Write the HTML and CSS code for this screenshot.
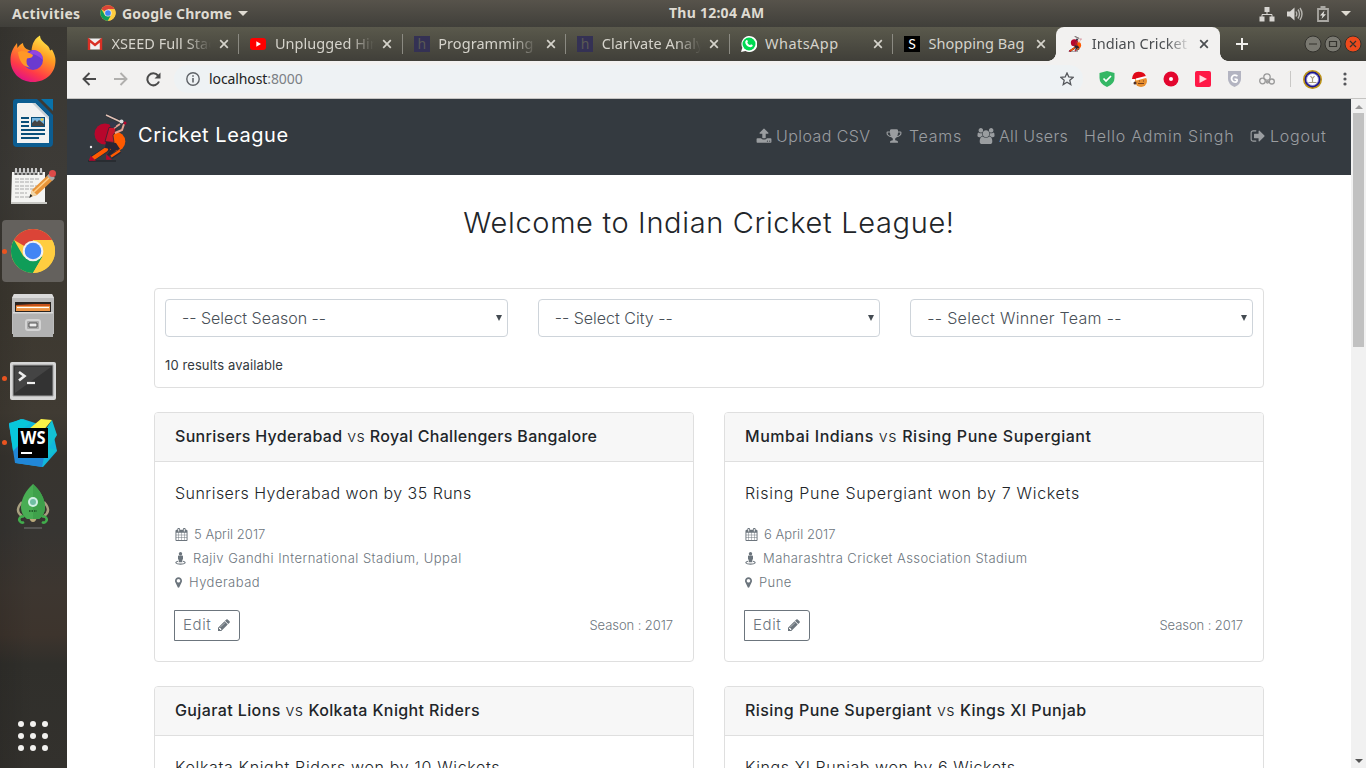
FILE: index.html
```html
<!DOCTYPE html>
<html lang="en">
<head>
<meta charset="utf-8">
<title>Indian Cricket League</title>
<link rel="stylesheet" href="styles.css">
</head>
<body>
<svg class="defs" width="0" height="0">
  <symbol id="chrome" viewBox="0 0 48 48">
    <circle cx="24" cy="24" r="23" fill="#ffcd40"/>
    <path d="M24 24 4.1 12.5A23 23 0 0 1 43.9 12.5H24z" fill="#db4437"/>
    <path d="M4.100 12.500A23 23 0 0 0 24 47L34 29.500 24 34 14 29.500z" fill="#0f9d58"/>
    <path d="M24 12.500h19.900A23 23 0 0 1 24 47l10-17z" fill="#ffcd40"/>
    <circle cx="24" cy="24" r="10.800" fill="#f1f1f1"/><circle cx="24" cy="24" r="8.600" fill="#4285f4"/>
  </symbol>
  <symbol id="player" viewBox="0 0 40 48">
    <circle cx="18" cy="20" r="10.500" fill="#b8062c"/><circle cx="28.500" cy="27.500" r="9.800" fill="#ff5a00"/>
    <path d="M1 47h28" stroke="#22262b" stroke-width="1.300"/>
    <path d="M20 35 6 44" stroke="#282635" stroke-width="5.500" stroke-linecap="round"/>
    <path d="M19 35.500 6.500 44" stroke="#ff5a00" stroke-width="4.200" stroke-linecap="round"/>
    <path d="M19 27l10 2 4 6-5 2-6 5-2-1 4-6-6-1z" fill="#292534"/>
    <path d="M33 37l-9 6" stroke="#282635" stroke-width="4"/><path d="M33 36.500l-9 6" stroke="#ff5a00" stroke-width="2.500"/>
    <path d="M22 13.500l7 0-1 5-2 3 1 7-9-1z" fill="#c8162d" stroke="#302434" stroke-width=".8"/>
    <path d="M28 19l7-3 2-6M27 14l6-4" stroke="#e4a394" stroke-width="2" fill="none"/>
    <circle cx="26" cy="10.500" r="3.200" fill="#33384b"/><path d="M19 1l15 7" stroke="#282c35" stroke-width="3"/><path d="M19 1l15 7" stroke="#e3c2b5" stroke-width="1.500"/>
    <circle cx="34.500" cy="7.500" r="2" fill="#ddd"/><circle cx="38" cy="9" r="1.500" fill="#b8062c"/><circle cx="4" cy="33" r="1.200" fill="#eee"/>
    <path d="M4 43l3 3H3zM20 42l3 3h-3z" fill="#b8062c" stroke="#b8062c" stroke-width="1.600"/>
  </symbol>
  <symbol id="upload" viewBox="0 0 1792 1792"><path d="M1344 1472q0-26-19-45t-45-19-45 19-19 45 19 45 45 19 45-19 19-45zm256 0q0-26-19-45t-45-19-45 19-19 45 19 45 45 19 45-19 19-45zm128-224v320q0 40-28 68t-68 28h-1472q-40 0-68-28t-28-68v-320q0-40 28-68t68-28h427q21 56 70.500 92t110.500 36h256q61 0 110.500-36t70.500-92h427q40 0 68 28t28 68zm-325-648q-17 40-59 40h-256v448q0 26-19 45t-45 19h-256q-26 0-45-19t-19-45v-448h-256q-42 0-59-40-17-39 14-69l448-448q18-19 45-19t45 19l448 448q31 30 14 69z"/></symbol>
  <symbol id="trophy" viewBox="0 0 1792 1792"><path d="M522 883q-74-162-74-371h-256v96q0 78 94.500 162t235.500 113zm1078-275v-96h-256q0 209-74 371 141-29 235.500-113t94.500-162zm128-128v128q0 71-41.500 143t-112 130-173 97.500-215.500 44.500q-42 54-95 95-38 34-52.500 72.500t-14.500 89.500q0 54 30.500 91t97.500 37q75 0 133.500 45.500t58.500 114.500v64q0 14-9 23t-23 9h-832q-14 0-23-9t-9-23v-64q0-69 58.500-114.500t133.500-45.500q67 0 97.500-37t30.500-91q0-51-14.500-89.500t-52.500-72.500q-53-41-95-95-113-5-215.500-44.500t-173-97.500-112-130-41.500-143v-128q0-40 28-68t68-28h288v-96q0-66 47-113t113-47h576q66 0 113 47t47 113v96h288q40 0 68 28t28 68z"/></symbol>
  <symbol id="users" viewBox="0 0 1920 1792"><path d="M593 896q-162 5-265 128h-134q-82 0-138-40.500t-56-118.500q0-353 124-353 6 0 43.500 21t97.500 42.500 119 21.500q67 0 133-23-5 37-5 66 0 139 81 256zm1071 637q0 120-73 189.500t-194 69.500h-874q-121 0-194-69.500t-73-189.500q0-53 3.500-103.500t14-109 26.500-108.500 43-97.500 62-81 85.500-53.500 111.500-20q10 0 43 21.500t73 48 107 48 135 21.500 135-21.500 107-48 73-48 43-21.500q61 0 111.500 20t85.500 53.500 62 81 43 97.500 26.500 108.500 14 109 3.500 103.500zm-1024-1277q0 106-75 181t-181 75-181-75-75-181 75-181 181-75 181 75 75 181zm704 384q0 159-112.500 271.500t-271.500 112.500-271.500-112.500-112.500-271.500 112.500-271.500 271.500-112.500 271.500 112.500 112.500 271.500zm576 225q0 78-56 118.500t-138 40.500h-134q-103-123-265-128 81-117 81-256 0-29-5-66 66 23 133 23 59 0 119-21.500t97.500-42.500 43.500-21q124 0 124 353zm-128-609q0 106-75 181t-181 75-181-75-75-181 75-181 181-75 181 75 75 181z"/></symbol>
  <symbol id="signout" viewBox="0 0 1792 1792"><path d="M704 1440q0 4 1 20t.5 26.500-3 23.500-10 19.500-20.500 6.500h-320q-119 0-203.500-84.500t-84.500-203.500v-704q0-119 84.500-203.500t203.500-84.500h320q13 0 22.500 9.500t9.500 22.500q0 4 1 20t.5 26.500-3 23.500-10 19.500-20.500 6.500h-320q-66 0-113 47t-47 113v704q0 66 47 113t113 47h312l11.500 1 11.500 3 8 5.500 7 9 2 13.500zm928-544q0 26-19 45l-544 544q-19 19-45 19t-45-19-19-45v-288h-448q-26 0-45-19t-19-45v-384q0-26 19-45t45-19h448v-288q0-26 19-45t45-19 45 19l544 544q19 19 19 45z"/></symbol>
  <symbol id="calendar" viewBox="0 0 1792 1792"><path d="M192 1664h288v-288h-288v288zm352 0h320v-288h-320v288zm-352-352h288v-320h-288v320zm352 0h320v-320h-320v320zm-352-384h288v-288h-288v288zm736 736h320v-288h-320v288zm-384-736h320v-288h-320v288zm768 736h288v-288h-288v288zm-384-352h320v-320h-320v320zm-352-864v-288q0-13-9.500-22.500t-22.500-9.500h-64q-13 0-22.500 9.500t-9.500 22.500v288q0 13 9.500 22.500t22.500 9.500h64q13 0 22.500-9.500t9.500-22.500zm736 864h288v-320h-288v320zm-384-384h320v-288h-320v288zm384 0h288v-288h-288v288zm32-480v-288q0-13-9.500-22.500t-22.500-9.500h-64q-13 0-22.500 9.500t-9.500 22.500v288q0 13 9.500 22.500t22.500 9.500h64q13 0 22.500-9.500t9.500-22.500zm384-64v1280q0 52-38 90t-90 38h-1408q-52 0-90-38t-38-90v-1280q0-52 38-90t90-38h128v-96q0-66 47-113t113-47h64q66 0 113 47t47 113v96h384v-96q0-66 47-113t113-47h64q66 0 113 47t47 113v96h128q52 0 90 38t38 90z"/></symbol>
  <symbol id="street" viewBox="0 0 11 13"><circle cx="5.500" cy="1.700" r="1.700"/><path d="M3.800 3.600h3.400q.8 0 .8.800V7.500H7.300V10.300H3.700V7.500H3V4.400q0-.8.800-.8z"/><path d="M3 9.300c-3.600.8-2.500 2.800 2.500 2.800S11.600 10.100 8 9.300" fill="none" stroke="currentColor" stroke-width="1.100"/></symbol>
  <symbol id="marker" viewBox="384 0 1024 1792"><path d="M1152 640q0-106-75-181t-181-75-181 75-75 181 75 181 181 75 181-75 75-181zm256 0q0 109-33 179l-364 774q-16 33-47.500 52t-67.500 19-67.500-19-46.500-52l-365-774q-33-70-33-179 0-212 150-362t362-150 362 150 150 362z"/></symbol>
  <symbol id="pencil" viewBox="128 128 1536 1536"><path d="M491 1536l91-91-235-235-91 91v107h128v128h107zm523-928q0-22-22-22-10 0-17 7l-542 542q-7 7-7 17 0 22 22 22 10 0 17-7l542-542q7-7 7-17zm-54-192l416 416-832 832h-416v-416zm683 96q0 53-37 90l-166 166-416-416 166-165q36-38 90-38 53 0 91 38l235 234q37 39 37 91z"/></symbol>
  <symbol id="close" viewBox="0 0 10 10"><path d="M1.200 1.200l7.600 7.600M8.800 1.200L1.200 8.800" stroke="currentColor" stroke-width="1.700"/></symbol>
</svg>

<header class="topbar">
  <span class="activities">Activities</span>
  <svg class="top-chrome" width="16" height="16"><use href="#chrome"/></svg>
  <span class="appname">Google Chrome</span>
  <i class="caret"></i>
  <span class="clock">Thu 12:04 AM</span>
  <div class="tray">
    <svg width="16" height="16" viewBox="0 0 16 16"><path d="M5.500 1h5v5h-5zM.5 10.500h5v5h-5zM10.500 10.500h5v5h-5z" fill="#d8d6d2"/><path d="M8 6v2.500M3 11V8.500h10V11" fill="none" stroke="#d8d6d2"/></svg>
    <svg width="16" height="16" viewBox="0 0 16 16"><path d="M0 5.500h3L7.500 1.500v13L3 10.500H0z" fill="#d8d6d2"/><path d="M9 5.500q1.500 2.500 0 5M11 3.500q3 4.500 0 9M13 2q4 6 0 12" fill="none" stroke="#b6b4af" stroke-width="1.400"/></svg>
    <svg width="12" height="16" viewBox="0 0 12 16"><path d="M1 3h10v12H1zM3.500 1h5" fill="none" stroke="#aaa8a3" stroke-width="1.800"/><path d="M7.500 4.500L3 9.500h2.500L4.500 13 9 8.300H6.500z" fill="#e0deda"/></svg>
    <i class="caret"></i>
  </div>
</header>

<div class="desktop">
  <nav class="dock">
    <div class="slot"><svg width="48" height="48" viewBox="0 0 48 48">
      <defs><linearGradient id="ff" x1=".8" y1="0" x2=".3" y2="1"><stop offset="0" stop-color="#fff44f"/><stop offset=".4" stop-color="#ff9a22"/><stop offset=".75" stop-color="#ff3b47"/><stop offset="1" stop-color="#e0108a"/></linearGradient></defs>
      <path d="M24 47C11 47 1.500 37.500 1.500 24.500 1.500 18 4 13 8 8l.5 5C10.500 10 12 9 14 8q0 3.500 3.500 6l5 2C23 8 26 3.500 31 .5c0 7 10 9 10 15l2-1q3.500 6 3.500 11C46.500 38 37 47 24 47z" fill="url(#ff)"/>
      <circle cx="24" cy="25" r="10" fill="#6a3ad0"/><path d="M24 15q10 1 10 10-8-8-16-5z" fill="#9346e0"/>
      <path d="M9 17q5-3 15 3 0 3-6 3.500-2 6 3 9-10-1-12-15z" fill="#ff9826"/></svg></div>
    <div class="slot"><svg width="40" height="48" viewBox="0 0 40 48"><path d="M3 0h21l16 16v28q0 4-4 4H4q-4 0-4-4V3q0-3 3-3z" fill="#0c5d91"/><path d="M28 0h12v12z" fill="#0872aa"/><path d="M5 4h17l14 14v26H4V5z" fill="#f2f2f2"/><path d="M22 4l14 14v3L19 4z" fill="#c9d1d5"/><path d="M8 19h8M8 23h8M8 27h8M8 31h24M8 35h24M8 39h18" stroke="#0a4f7a" stroke-width="2"/><path d="M18 18h14v10H18z" fill="#0a4f7a"/><path d="M19 19h12v8H19z" fill="#79b6df"/><path d="M19 27v-3l3-3 2 2 2-2 5 4v2z" fill="#444"/><circle cx="29" cy="20.500" r="1.300" fill="#f3d13c"/></svg></div>
    <div class="slot"><svg class="notes" width="46" height="40" viewBox="0 0 46 40"><path d="M2 5h33v32H1z" fill="#f4f4f2"/><path d="M1 37h36v-2H1z" fill="#c9c9c5"/><path d="M6 2v6M10 2v6M14 2v6M18 2v6M22 2v6M26 2v6M31 2v6" stroke="#555" stroke-width="3"/><path d="M6 1v5M10 1v5M14 1v5M18 1v5M22 1v5M26 1v5M31 1v5" stroke="#eee" stroke-width="1.500"/><path d="M5 12h24M5 15h18M5 19h26M5 22h20M5 26h12M5 30h16" stroke="#aaa" stroke-dasharray="4 1"/><path d="M20 30l2-7L39 7l5 5-17 16z" fill="#e8953a"/><path d="M24 25L41 9" stroke="#ffd08a" stroke-width="1.500"/><path d="M20 30l2-7 5 5z" fill="#f1d6a8"/><path d="M19 31l1.500-4 2 2z" fill="#222"/><path d="M37 9l3-3 5 5-3 3z" fill="#aaa"/><circle cx="42.500" cy="6.500" r="3.500" fill="#dd4a49"/></svg></div>
    <div class="slot running selected"><svg width="46" height="46"><use href="#chrome"/></svg></div>
    <div class="slot"><svg width="44" height="44" viewBox="0 0 44 44"><path d="M3 1h38l2 4v36H1V5z" fill="#bcbcbc"/><path d="M3 1h38l2 4H1z" fill="#dadada"/><path d="M4 9h36v10H4z" fill="#29231f"/><path d="M5 12l18-1 16 0v7H5z" fill="#c6521c"/><path d="M5 13h34v5H5z" fill="#ee9545"/><path d="M6 14.500h32" stroke="#fff" stroke-width="1.200"/><path d="M2 19h40v25H2z" fill="#b2b2b2"/><path d="M2 19h40v1.500H2z" fill="#d9d9d9"/><rect x="15" y="27" width="14" height="10" rx="2" fill="#aaa" stroke="#d4d4d4" stroke-width="2"/><path d="M18 30h8v4h-8z" fill="#eee" stroke="#555"/></svg></div>
    <div class="slot running"><svg class="terminal" width="46" height="38" viewBox="0 0 46 38"><rect width="46" height="38" rx="2" fill="#d6d6d6"/><path d="M3 3h40v31H3z" fill="#333" stroke="#a0a0a0"/><path d="M5 5h36L5 31z" fill="#444"/><path d="M9 10l5.500 4L9 18.500" stroke="#eee" stroke-width="2.600" fill="none"/><path d="M17 21h8" stroke="#eee" stroke-width="2.200"/></svg></div>
    <div class="slot running"><svg width="48" height="48" viewBox="0 0 48 48"><path d="M0 4L14 0l12 4 18 9 4 19-14 16-27-4z" fill="#11b7dd"/><path d="M0 5l6 39 27 4 2-10H12L8 4z" fill="#2187d8"/><path d="M0 5L12 0l10 4-12 8v14L4 32z" fill="#08c7db"/><path d="M20 10L32 0l11 1-9 11z" fill="#fcf348"/><path d="M37 10l6-9 5 15-8 13 8 2-10 8z" fill="#13c1d3"/><path d="M9 9h30v30H9z" fill="#000"/><text class="ws" x="24" y="25" text-anchor="middle" textLength="25" lengthAdjust="spacingAndGlyphs">WS</text><path d="M12 34h11" stroke="#fff" stroke-width="2"/></svg></div>
    <div class="slot"><svg class="rocket" width="34" height="48" viewBox="0 0 34 48"><path d="M6 20q-8 9 0 14M28 20q8 9 0 14" stroke="#a8a080" stroke-width="2.500" fill="none"/><path d="M13 35h8q-1 5-4 5t-4-5z" fill="#b9a97b"/><path d="M17 2C10 8 5 17 5 25q0 8 6 12h12q6-4 6-12C29 17 24 8 17 2z" fill="#49ad54"/><path d="M17 2v35h6q6-4 6-12C29 17 24 8 17 2z" fill="#3fa14b"/><circle cx="17" cy="20" r="5" fill="#d0efe3"/><circle cx="17" cy="20" r="3" fill="#70bea3"/><path d="M13 29h8" stroke="#25632d" stroke-width="2" stroke-dasharray="1.500 1"/><path d="M8 40a3 3 0 1 1 0-5M26 35a3 3 0 1 1 0 5" stroke="#41ac4c" stroke-width="2.500" fill="none"/><path d="M8 46h18" stroke="#777" /></svg></div>
    <svg class="apps" width="30" height="30" viewBox="0 0 30 30"><circle cx="3" cy="3" r="3"/><circle cx="15" cy="3" r="3"/><circle cx="27" cy="3" r="3"/><circle cx="3" cy="15" r="3"/><circle cx="15" cy="15" r="3"/><circle cx="27" cy="15" r="3"/><circle cx="3" cy="27" r="3"/><circle cx="15" cy="27" r="3"/><circle cx="27" cy="27" r="3"/></svg>
  </nav>

  <div class="browser">
    <div class="tabs">
      <div class="tab"><svg width="16" height="16" viewBox="0 0 16 16"><path d="M1 2.500h14v11H1z" fill="#f1f1f1"/><path d="M2 14V4l6 5 6-5v10" stroke="#d93025" stroke-width="2.400" fill="none"/></svg><span class="title">XSEED Full Stack</span><svg class="x"><use href="#close"/></svg></div>
      <div class="tab"><svg width="16" height="16" viewBox="0 0 16 16"><rect x="0" y="2" width="16" height="12" rx="3" fill="red"/><path d="M6.300 5.300v5.400L11 8z" fill="#fff"/></svg><span class="title">Unplugged Hindi</span><svg class="x"><use href="#close"/></svg></div>
      <div class="tab"><span class="fav-h">h</span><span class="title">Programming C</span><svg class="x"><use href="#close"/></svg></div>
      <div class="tab"><span class="fav-h">h</span><span class="title">Clarivate Analytics</span><svg class="x"><use href="#close"/></svg></div>
      <div class="tab"><svg width="16" height="16" viewBox="0 0 16 16"><path d="M0 16l1.300-4.300A8 8 0 1 1 4.500 15z" fill="#fff"/><circle cx="8" cy="8" r="6.500" fill="#00d952"/><path d="M5.200 4.300c1-.7 1.300.1 1.700 1.400l-.6 1c.7 1.300 1.500 2 2.800 2.600l.9-1c1.500.6 2 .9 1.600 1.800-1.500 3-8.200-.5-7.300-4.500z" fill="#fff"/></svg><span class="title">WhatsApp</span><svg class="x"><use href="#close"/></svg></div>
      <div class="tab"><span class="fav-s">S</span><span class="title">Shopping Bag</span><svg class="x"><use href="#close"/></svg></div>
      <div class="tab active"><svg width="16" height="16"><use href="#player"/></svg><span class="title">Indian Cricket League</span><svg class="x"><use href="#close"/></svg></div>
      <svg class="plus" width="12" height="12" viewBox="0 0 12 12"><path d="M6 0v12M0 6h12" stroke="#f0efec" stroke-width="2"/></svg>
      <svg class="winbtns" width="58" height="18" viewBox="0 0 58 18"><g stroke="#33322d"><circle cx="9" cy="9" r="8" fill="#7a7971"/><circle cx="29" cy="9" r="8" fill="#7a7971"/><circle cx="49" cy="9" r="8" fill="#ee4a1c"/></g><path d="M5 9h8M25.500 6.500h7v5h-7zM46 6l6 6m0-6l-6 6" fill="none" stroke="#33322d" stroke-width="1.200"/></svg>
    </div>

    <div class="toolbar">
      <svg width="14" height="14" viewBox="0 0 14 14"><path d="M14 7H1.500M7.500 1L1.500 7l6 6" fill="none" stroke="#4a4a4a" stroke-width="1.900"/></svg>
      <svg class="fwd" width="14" height="14" viewBox="0 0 14 14"><path d="M0 7h12.500M6.500 1l6 6-6 6" fill="none" stroke="#b0afad" stroke-width="1.900"/></svg>
      <svg class="reload" width="15" height="15" viewBox="0 0 15 15"><path d="M13 9.500A6 6 0 1 1 12 3.500" fill="none" stroke="#4a4a4a" stroke-width="2"/><path d="M14.500.5v6h-6z" fill="#4a4a4a"/></svg>
      <div class="omnibox">
        <svg width="14" height="14" viewBox="0 0 14 14"><circle cx="7" cy="7" r="6.200" fill="none" stroke="#5f6368" stroke-width="1.400"/><path d="M7 6v4.500M7 3.300v1.500" stroke="#5f6368" stroke-width="1.600"/></svg>
        <span class="url">localhost<span class="port">:8000</span></span>
        <svg class="star" width="14" height="14" viewBox="0 0 14 14"><path d="M7 1l1.800 4 4.300.4-3.300 2.900 1 4.300L7 10.300l-3.800 2.300 1-4.300L.9 5.400 5.200 5z" fill="none" stroke="#55585c" stroke-width="1.300"/></svg>
      </div>
      <div class="exts">
        <svg viewBox="0 0 16 16"><path d="M8 0l7.500 2v5q0 6-7.500 9Q.5 13 .5 7V2z" fill="#35b765"/><path d="M4.500 7.500L7 10l5-5" stroke="#fff" stroke-width="1.700" fill="none"/></svg>
        <svg viewBox="0 0 16 16"><circle cx="10" cy="10" r="6" fill="#e89030"/><path d="M1 8Q2-1 10 1q5 1 5 6L5 8z" fill="#e00818"/><path d="M5 8.500l10-2.500" stroke="#fff" stroke-width="2"/><circle cx="2" cy="10" r="2" fill="#fff"/><path d="M7 12.500h6M8 10h1M12 10h1" stroke="#7b401a"/><circle cx="4" cy="12" r="1.500" fill="#4e3028"/></svg>
        <svg viewBox="0 0 16 16"><circle cx="8" cy="8" r="7.500" fill="#e3062e"/><circle cx="8" cy="8" r="2" fill="#fff"/></svg>
        <svg viewBox="0 0 16 16"><rect width="16" height="16" rx="2" fill="#ff1846"/><path d="M4.500 4v8L12 8z" fill="#ffd9df"/></svg>
        <svg viewBox="0 0 16 16"><path d="M1 0h13v8q0 5-6.500 8Q1 13 1 8z" fill="#b3b4c1"/><path d="M10.500 5Q7 3 5.200 5.500t.8 5q3 1.500 4-.5t-2.500-2" fill="none" stroke="#fff" stroke-width="1.700"/></svg>
        <svg viewBox="0 0 16 16"><g fill="none" stroke="#999" stroke-width="1.300"><circle cx="3.500" cy="10" r="2.800"/><circle cx="8" cy="6" r="3.200"/><circle cx="12.800" cy="10.500" r="2.500"/><circle cx="8.500" cy="11" r="1"/></g></svg>
      </div>
      <i class="bar"></i>
      <svg class="avatar" width="19" height="19" viewBox="0 0 19 19"><circle cx="9.500" cy="9.500" r="8.700" fill="#1e168e" stroke="#bd9416" stroke-width="1.600"/><circle cx="9.500" cy="9.500" r="6" fill="#fff" stroke="#8582cc"/><path d="M5.500 12.500h8M7.500 6l2 2.500L11.500 6M9.500 8v4" stroke="#a59b80" stroke-width="1.200" fill="none"/></svg>
      <svg class="dots" width="4" height="14" viewBox="0 0 4 14"><circle cx="2" cy="2" r="1.600"/><circle cx="2" cy="7" r="1.600"/><circle cx="2" cy="12" r="1.600"/></svg>
    </div>

    <div class="viewport">
      <div class="page">
        <header class="navbar">
          <svg class="logo" width="40" height="48"><use href="#player"/></svg>
          <span class="brand">Cricket League</span>
          <div class="nav">
            <span class="nav-item n-upload"><svg width="16" height="16"><use href="#upload"/></svg>Upload CSV</span>
            <span class="nav-item n-teams"><svg width="16" height="16"><use href="#trophy"/></svg>Teams</span>
            <span class="nav-item n-users"><svg width="18" height="16"><use href="#users"/></svg>All Users</span>
            <span class="nav-item n-hello">Hello Admin Singh</span>
            <span class="nav-item n-logout"><svg width="16" height="16"><use href="#signout"/></svg>Logout</span>
          </div>
        </header>
        <main class="container">
          <h1>Welcome to Indian Cricket League!</h1>
          <section class="filters">
            <div class="selects">
              <div class="select"><span>-- Select Season --</span><i></i></div>
              <div class="select"><span>-- Select City --</span><i></i></div>
              <div class="select"><span>-- Select Winner Team --</span><i></i></div>
            </div>
            <p class="results">10 results available</p>
          </section>
          <section class="cards">
            <article class="card">
              <h2><b>Sunrisers Hyderabad</b> vs <b>Royal Challengers Bangalore</b></h2>
              <div class="body">
                <p class="result">Sunrisers Hyderabad won by 35 Runs</p>
                <p class="meta date"><svg width="13" height="13"><use href="#calendar"/></svg><span>5 April 2017</span></p>
                <p class="meta"><svg class="m-street" width="11" height="13"><use href="#street"/></svg><span>Rajiv Gandhi International Stadium, Uppal</span></p>
                <p class="meta"><svg class="m-marker" width="7" height="13"><use href="#marker"/></svg><span>Hyderabad</span></p>
                <div class="foot"><span class="edit">Edit<svg width="12" height="12"><use href="#pencil"/></svg></span><span class="season">Season : 2017</span></div>
              </div>
            </article>
            <article class="card">
              <h2><b>Mumbai Indians</b> vs <b>Rising Pune Supergiant</b></h2>
              <div class="body">
                <p class="result">Rising Pune Supergiant won by 7 Wickets</p>
                <p class="meta date"><svg width="13" height="13"><use href="#calendar"/></svg><span>6 April 2017</span></p>
                <p class="meta"><svg class="m-street" width="11" height="13"><use href="#street"/></svg><span>Maharashtra Cricket Association Stadium</span></p>
                <p class="meta"><svg class="m-marker" width="7" height="13"><use href="#marker"/></svg><span>Pune</span></p>
                <div class="foot"><span class="edit">Edit<svg width="12" height="12"><use href="#pencil"/></svg></span><span class="season">Season : 2017</span></div>
              </div>
            </article>
            <article class="card">
              <h2><b>Gujarat Lions</b> vs <b>Kolkata Knight Riders</b></h2>
              <div class="body"><p class="result">Kolkata Knight Riders won by 10 Wickets</p></div>
            </article>
            <article class="card">
              <h2><b>Rising Pune Supergiant</b> vs <b>Kings XI Punjab</b></h2>
              <div class="body"><p class="result">Kings XI Punjab won by 6 Wickets</p></div>
            </article>
          </section>
        </main>
      </div>
      <div class="scrollbar"><i class="up"></i><div class="thumb"></div><i class="down"></i></div>
    </div>
  </div>
</div>
</body>
</html>
```
FILE: styles.css
```css
* { box-sizing: border-box; }
body { margin: 0; width: 1366px; height: 768px; overflow: hidden; font-family: Inter, "Noto Sans", sans-serif; font-size: 16px; color: #212529; }
.defs { position: absolute; }
svg { flex: none; display: block; fill: currentColor; }
h1, h2, p { margin: 0; font-weight: 300; white-space: nowrap; }

.topbar { position: relative; height: 27px; display: flex; align-items: center; padding-left: 12px; background: linear-gradient(#57534b, #403f3a); color: #dfdbd2; font: bold 14px/27px "Noto Sans", sans-serif; white-space: nowrap; }
.activities { width: 88px; letter-spacing: .35px; }
.top-chrome { margin-top: -1px; }
.appname { width: 112px; margin-left: 6px; letter-spacing: .2px; }
.caret { margin-left: 4px; border: 5px solid transparent; border-top-color: #dfdbd2; border-bottom: 0; }
.clock { position: absolute; left: 669px; top: -1px; letter-spacing: .25px; }
.tray { display: flex; align-items: center; margin-left: auto; padding-right: 15px; }
.tray svg { margin-right: 12px; }
.tray svg:nth-child(2) { margin-right: 14px; }
.tray svg:nth-child(3) { margin-right: 8px; }

.desktop { display: flex; height: 741px; }
.dock { width: 67px; display: flex; flex-direction: column; align-items: center; padding-right: 2px; background: linear-gradient(90deg, rgba(0,0,0,.1), transparent 50%), linear-gradient(#393732 0, #3d3b37 20%, #3c3830 36%, #403b33 52%, #37342f 58%, #373532 68%, #3d3630 76%, #3d342d 82%, #302f2b 86%, #33312d 100%); }
.slot { position: relative; width: 62px; height: 64px; display: flex; align-items: center; justify-content: center; }
.selected { height: 62px; margin: 1px 0; border-radius: 4px; background: #64615d; }
.running::before { content: ""; position: absolute; left: 0; top: 29px; width: 5px; height: 5px; border-radius: 50%; background: #e95420; }
.terminal { margin-top: 3px; }
.rocket { margin-top: -2px; }
.ws { font: bold 17px "Open Sans", sans-serif; fill: #fff; }
.apps { margin-top: auto; margin-bottom: 17px; fill: #f2f1ef; }

.browser { width: 1299px; display: flex; flex-direction: column; }
.tabs { height: 34px; display: flex; align-items: center; padding-left: 9px; background: linear-gradient(#5a594c, #403f39); }
.tab { position: relative; flex: none; width: 163.400px; height: 34px; display: flex; align-items: center; padding-left: 11px; color: #d5d3cb; font: 14.500px/33px "Noto Sans", sans-serif; }
.tab:not(.active):not(:nth-child(6))::after { content: ""; position: absolute; right: 0; top: 7px; width: 1px; height: 20px; background: #8b8a82; }
.title { width: 99px; height: 34px; margin-left: 8.500px; overflow: hidden; white-space: nowrap; letter-spacing: .05px; -webkit-mask-image: linear-gradient(90deg, #000 75%, transparent 100%); mask-image: linear-gradient(90deg, #000 75%, transparent 100%); }
.tab:nth-child(5) .title, .tab:nth-child(6) .title { -webkit-mask-image: none; mask-image: none; }
.tab:nth-child(5) .title { letter-spacing: .45px; }
.x { width: 10px; height: 10px; margin-left: 8.500px; }
.active { background: #f2f1f0; color: #4a4d50; border-radius: 8px 8px 0 0; }
.active::before, .active::after { content: ""; position: absolute; bottom: 0; width: 8px; height: 8px; }
.active::before { left: -8px; background: radial-gradient(circle at 0 0, transparent 7.500px, #f2f1f0 8px); }
.active::after { right: -8px; background: radial-gradient(circle at 100% 0, transparent 7.500px, #f2f1f0 8px); }
.fav-h, .fav-s { flex: none; width: 16px; height: 16px; text-align: center; }
.fav-h { background: #343154; color: #5a5954; font: 14px/16px "Noto Sans", sans-serif; }
.fav-s { background: #000; color: #fff; font: 14px/16px Lato, sans-serif; }
.plus { margin-left: 16px; }
.winbtns { margin-left: auto; margin-right: 4px; }

.toolbar { height: 38px; display: flex; align-items: center; padding: 0 0 1px 15px; background: #f2f1f0; border-bottom: 1px solid #c5c4c2; }
.fwd { margin-left: 18px; }
.reload { margin-left: 18px; }
.omnibox { flex: none; width: 909px; height: 28px; margin: 0 16px 0 13px; padding: 0 9px 0 12px; border-radius: 14px; display: flex; align-items: center; background: #eef2f4; }
.url { margin-left: 9px; font: 14px/28px "Noto Sans", sans-serif; letter-spacing: -.1px; color: #222; }
.port { color: #7b8084; }
.star { margin-left: auto; }
.exts { display: flex; gap: 16px; }
.exts svg { width: 16px; height: 16px; }
.bar { width: 1px; height: 16px; margin-left: 15px; background: #c9c8c6; }
.avatar { margin-left: 12px; }
.dots { margin-left: 21px; fill: #55565a; }

.viewport { display: flex; height: 669px; overflow: hidden; background: #fff; }
.page { width: 1284px; }
.navbar { height: 76px; display: flex; align-items: center; padding: 0 24px 0 20px; background: #343a40; white-space: nowrap; }
.logo { margin-top: 1px; }
.brand { margin-left: 11px; margin-top: -4px; font-size: 20px; font-weight: 400; color: #fff; letter-spacing: .53px; }
.nav { display: flex; gap: 16px; margin-left: auto; margin-top: -2px; font-weight: 300; color: #9a9da0; }
.nav-item { display: flex; align-items: center; gap: 4px; }
.n-upload { width: 114px; letter-spacing: .42px; }
.n-teams { width: 75px; gap: 7px; letter-spacing: .7px; }
.n-users { width: 91px; letter-spacing: .35px; }
.n-hello { width: 150px; letter-spacing: .8px; }
.n-logout { width: 77px; letter-spacing: .8px; }

.container { width: 1110px; margin: 0 auto; }
h1 { margin-top: 30px; height: 36px; font-size: 29px; line-height: 36px; font-weight: 300; text-align: center; letter-spacing: .66px; }
.filters { height: 100px; margin-top: 47px; padding: 10px; border: 1px solid #dfdfdf; border-radius: 4px; }
.selects { display: grid; grid-template-columns: repeat(3, 1fr); gap: 30px; }
.select { height: 38px; display: flex; align-items: center; justify-content: space-between; padding: 0 5px 0 16px; border: 1px solid #ced4da; border-radius: 4px; color: #495057; font-weight: 300; }
.select:nth-child(3) { letter-spacing: .3px; }
.select i { border: 3.500px solid transparent; border-top: 6px solid #444b52; border-bottom: 0; }
.results { margin-top: 18px; font-size: 13px; line-height: 20px; font-weight: 400; letter-spacing: .1px; color: #343a40; }
.cards { display: grid; grid-template-columns: 540px 540px; column-gap: 30px; row-gap: 24px; margin-top: 24px; }
.card { height: 250px; border: 1px solid #dfdfdf; border-radius: 4px; overflow: hidden; }
.card h2 { height: 49px; padding-left: 20px; font-size: 16px; line-height: 47px; background: #f7f7f7; border-bottom: 1px solid #dfdfdf; letter-spacing: .31px; }
.card b { font-weight: 500; }
.body { padding: 19px 20px 0; }
.result { height: 24px; line-height: 24px; margin-bottom: 17px; letter-spacing: .46px; }
.card:nth-child(2) h2 { letter-spacing: .55px; }
.card:nth-child(3) h2 { letter-spacing: .39px; }
.card:nth-child(4) h2 { letter-spacing: .44px; }
.card:nth-child(2) .result { letter-spacing: .7px; }
.card:nth-child(3) .result { letter-spacing: .66px; }
.card:nth-child(4) .result { letter-spacing: .57px; }
.meta { height: 24px; display: flex; align-items: center; gap: 6px; font-size: 13px; color: #6c757d; letter-spacing: .48px; }
.card:nth-child(2) .meta { letter-spacing: .43px; }
.card .date, .card:nth-child(2) .date { letter-spacing: .04px; }
.m-street + span { margin-left: 1px; }
.m-marker + span { margin-left: 1px; }
.foot { display: flex; align-items: center; justify-content: space-between; margin: 16px 0 0 -1px; }
.edit { width: 66px; height: 31px; display: flex; align-items: center; gap: 7px; padding: 0 0 2px 8px; border: 1px solid #6c757d; border-radius: 0 3px 3px 0; color: #6c757d; font-size: 15px; font-weight: 300; letter-spacing: .6px; }
.season { margin-top: -2px; font-size: 13px; font-weight: 300; color: #6c757d; letter-spacing: -.07px; }

.scrollbar { width: 15px; display: flex; flex-direction: column; align-items: center; background: #f1f1f1; }
.up { margin-top: 6px; border: 4px solid transparent; border-bottom-color: #999; border-top: 0; }
.thumb { width: 11px; height: 234px; margin-top: 4px; background: #c1c1c1; }
.down { margin-top: auto; margin-bottom: 5px; border: 4px solid transparent; border-top-color: #555; border-bottom: 0; }
```
